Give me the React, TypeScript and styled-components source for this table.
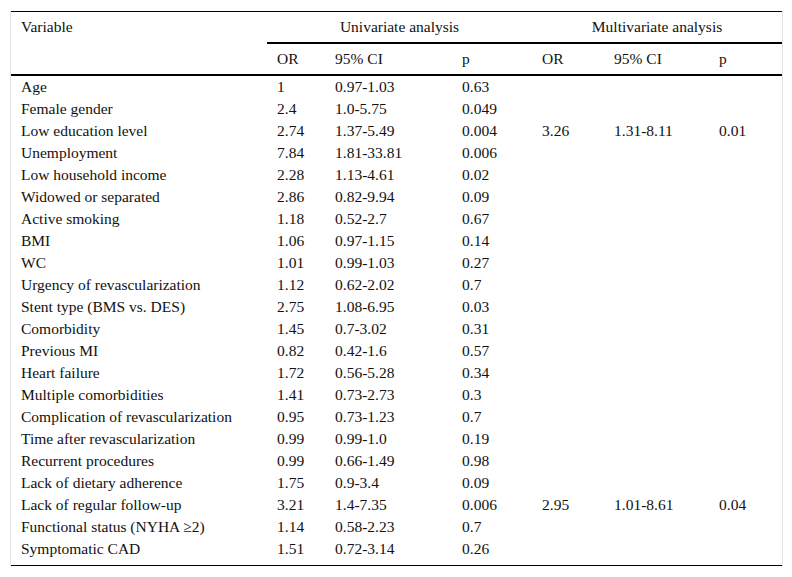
import React from "react";
import styled, { createGlobalStyle } from "styled-components";

const GlobalStyle = createGlobalStyle`
  html, body {
    margin: 0;
    padding: 0;
    background: #fff;
  }
  body {
    font-family: "Liberation Serif", "Times New Roman", serif;
    color: #111;
  }
`;

type Row = {
  label: string;
  uni: [string, string, string];
  multi?: [string, string, string];
};

const rows: Row[] = [
  { label: "Age", uni: ["1", "0.97-1.03", "0.63"] },
  { label: "Female gender", uni: ["2.4", "1.0-5.75", "0.049"] },
  { label: "Low education level", uni: ["2.74", "1.37-5.49", "0.004"], multi: ["3.26", "1.31-8.11", "0.01"] },
  { label: "Unemployment", uni: ["7.84", "1.81-33.81", "0.006"] },
  { label: "Low household income", uni: ["2.28", "1.13-4.61", "0.02"] },
  { label: "Widowed or separated", uni: ["2.86", "0.82-9.94", "0.09"] },
  { label: "Active smoking", uni: ["1.18", "0.52-2.7", "0.67"] },
  { label: "BMI", uni: ["1.06", "0.97-1.15", "0.14"] },
  { label: "WC", uni: ["1.01", "0.99-1.03", "0.27"] },
  { label: "Urgency of revascularization", uni: ["1.12", "0.62-2.02", "0.7"] },
  { label: "Stent type (BMS vs. DES)", uni: ["2.75", "1.08-6.95", "0.03"] },
  { label: "Comorbidity", uni: ["1.45", "0.7-3.02", "0.31"] },
  { label: "Previous MI", uni: ["0.82", "0.42-1.6", "0.57"] },
  { label: "Heart failure", uni: ["1.72", "0.56-5.28", "0.34"] },
  { label: "Multiple comorbidities", uni: ["1.41", "0.73-2.73", "0.3"] },
  { label: "Complication of revascularization", uni: ["0.95", "0.73-1.23", "0.7"] },
  { label: "Time after revascularization", uni: ["0.99", "0.99-1.0", "0.19"] },
  { label: "Recurrent procedures", uni: ["0.99", "0.66-1.49", "0.98"] },
  { label: "Lack of dietary adherence", uni: ["1.75", "0.9-3.4", "0.09"] },
  { label: "Lack of regular follow-up", uni: ["3.21", "1.4-7.35", "0.006"], multi: ["2.95", "1.01-8.61", "0.04"] },
  { label: "Functional status (NYHA \u22652)", uni: ["1.14", "0.58-2.23", "0.7"] },
  { label: "Symptomatic CAD", uni: ["1.51", "0.72-3.14", "0.26"] },
];

const widths = [256, 58, 127, 80, 72, 105, 73];

const Wrapper = styled.div`
  margin: 11px 0 0 10px;
  width: 771px;
  border-left: 1px solid #e4e4e4;
  border-right: 1px solid #e4e4e4;
`;

const Table = styled.table`
  width: 771px;
  table-layout: fixed;
  border-collapse: collapse;
  border-spacing: 0;
  font-size: 15.5px;
  border-top: 1px solid #000;
  border-bottom: 1px solid #000;
`;

const HeadCell = styled.th<{ $center?: boolean; $rule?: boolean; $top?: boolean }>`
  font-weight: normal;
  text-align: ${(p) => (p.$center ? "center" : "left")};
  vertical-align: ${(p) => (p.$top ? "top" : "middle")};
  padding: ${(p) => (p.$top ? "6px 10px 0" : "0 10px 2px")};
  height: 28px;
  line-height: 17px;
  border-bottom: ${(p) => (p.$rule ? "2px solid #000" : "none")};
`;

const Cell = styled.td`
  padding: 0 10px 2px;
  height: 20px;
  line-height: 17px;
  white-space: nowrap;
`;

const Spacer = styled.td`
  height: 5px;
  padding: 0;
`;

export default function App() {
  return (
    <>
      <GlobalStyle />
      <Wrapper>
        <Table>
          <colgroup>
            {widths.map((w, i) => (
              <col key={i} style={{ width: w }} />
            ))}
          </colgroup>
          <thead>
            <tr>
              <HeadCell rowSpan={2} $top $rule>
                Variable
              </HeadCell>
              <HeadCell colSpan={3} $center $rule>
                Univariate analysis
              </HeadCell>
              <HeadCell colSpan={3} $center $rule>
                Multivariate analysis
              </HeadCell>
            </tr>
            <tr>
              <HeadCell $rule>OR</HeadCell>
              <HeadCell $rule>95% CI</HeadCell>
              <HeadCell $rule>p</HeadCell>
              <HeadCell $rule>OR</HeadCell>
              <HeadCell $rule>95% CI</HeadCell>
              <HeadCell $rule>p</HeadCell>
            </tr>
          </thead>
          <tbody>
            {rows.map((r) => (
              <tr key={r.label}>
                <Cell>{r.label}</Cell>
                {r.uni.map((v, i) => (
                  <Cell key={"u" + i}>{v}</Cell>
                ))}
                {[0, 1, 2].map((i) => (
                  <Cell key={"m" + i}>{r.multi ? r.multi[i] : ""}</Cell>
                ))}
              </tr>
            ))}
            <tr>
              <Spacer colSpan={7} />
            </tr>
          </tbody>
        </Table>
      </Wrapper>
    </>
  );
}
